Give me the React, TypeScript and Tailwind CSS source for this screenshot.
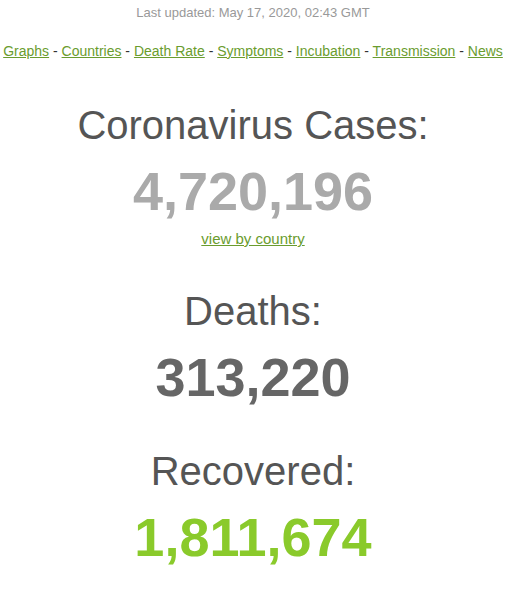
const links = [
  "Graphs",
  "Countries",
  "Death Rate",
  "Symptoms",
  "Incubation",
  "Transmission",
  "News",
];

function Counter({
  label,
  value,
  color,
  children,
}: {
  label: string;
  value: string;
  color: string;
  children?: React.ReactNode;
}) {
  return (
    <div className="flex flex-col items-center">
      <h1 className="text-[40px] leading-[46px] font-normal text-[#555]">{label}</h1>
      <div className={`mt-3 text-[54px] leading-[62px] font-bold ${color}`}>{value}</div>
      {children}
    </div>
  );
}

export default function App() {
  return (
    <main className="min-h-[600px] bg-white pr-[13px] font-['Liberation_Sans',Arial,sans-serif] text-center">
      <div className="pt-[5px] text-[13px] leading-4 text-[#999]">
        Last updated: May 17, 2020, 02:43 GMT
      </div>

      <nav className="mt-[21px] text-[14px] leading-[18px] text-[#333] whitespace-nowrap">
        {links.map((l, i) => (
          <span key={l}>
            {i > 0 && " - "}
            <a href="#" className="text-[#6a9c2e] underline">
              {l}
            </a>
          </span>
        ))}
      </nav>

      <div className="mt-[42px] flex flex-col gap-[40px]">
        <Counter label="Coronavirus Cases:" value="4,720,196" color="text-[#aaa]">
          <a href="#" className="mt-2 text-[15px] leading-[18px] text-[#6a9c2e] underline">
            view by country
          </a>
        </Counter>
        <Counter label="Deaths:" value="313,220" color="text-[#666]" />
        <Counter label="Recovered:" value="1,811,674" color="text-[#8aca2b]" />
      </div>
    </main>
  );
}
